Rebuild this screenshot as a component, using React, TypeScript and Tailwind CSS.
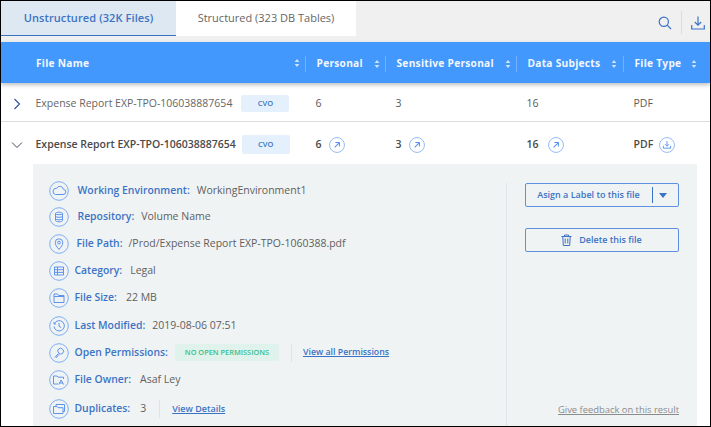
import React from "react";

const ink = "#3b73c4";
const ring = "#7cabf5";

function Sort() {
  return (
    <svg width="6" height="10" viewBox="0 0 6 10" className="shrink-0">
      <path d="M3 1 L5.4 4 H0.6 Z M3 9 L5.4 6 H0.6 Z" fill="#cfe3ff" />
    </svg>
  );
}

function Circle({ children, size = 20 }: { children?: React.ReactNode; size?: number }) {
  return (
    <svg width={size} height={size} viewBox="0 0 20 20" fill="none" stroke={ring} strokeWidth="1" className="shrink-0">
      <circle cx="10" cy="10" r="9.3" strokeWidth="1" />
      {children}
    </svg>
  );
}

const Arrow = () => (
  <Circle size={16}>
    <path d="M7 13 L13 7 M8 7 H13 V12" strokeWidth="1.3" stroke="#5b93ec" />
  </Circle>
);

const Down = () => (
  <Circle size={16}>
    <path d="M10 5 V11.5 M7.5 9 L10 11.5 L12.5 9 M5.5 11 V14 H14.5 V11" strokeWidth="1.2" stroke="#5b93ec" />
  </Circle>
);

const icons: Record<string, React.ReactNode> = {
  cloud: <path d="M6.5 13.5 H14 a2.6 2.6 0 0 0 .4-5.2 A3.6 3.6 0 0 0 7.6 7.4 A3.1 3.1 0 0 0 6.5 13.5 Z" />,
  db: <path d="M6.5 6.5 C6.5 4.8 13.5 4.8 13.5 6.5 V13.5 C13.5 15.2 6.5 15.2 6.5 13.5 Z M6.5 6.8 C7.5 8 12.5 8 13.5 6.8 M6.5 9.5 C7.5 10.6 12.5 10.6 13.5 9.5 M6.5 12 C7.5 13.1 12.5 13.1 13.5 12" />,
  pin: <path d="M10 15.5 C8 13 6.2 11 6.2 8.6 A3.8 3.8 0 0 1 13.8 8.6 C13.8 11 12 13 10 15.5 Z M10 7.2 A1.4 1.4 0 1 0 10 10 A1.4 1.4 0 1 0 10 7.2" />,
  grid: <path d="M5.5 6 H14.5 V14 H5.5 Z M5.5 8.7 H14.5 M5.5 11.4 H14.5 M8.5 6 V14" />,
  folder: <path d="M5 6 H8.5 L9.5 7.5 H15 V14.5 H5 Z M5 8.5 H15" />,
  clock: <path d="M5.5 7.5 A5.2 5.2 0 1 1 5 10.5 M5 6 V8 H7 M10 7 V10.3 L12.2 11.5" />,
  key: <path d="M5.8 14.6 L9.4 10.6 M6.9 15 L10.2 11.2 M13.6 6.2 A2.7 2.7 0 1 1 9.8 10 A2.7 2.7 0 1 1 13.6 6.2 Z" />,
  owner: <path d="M4.5 6 H8 L9 7.2 H14.5 V9 M4.5 6 V14 H9 M12 10 L9.8 14.5 M12 10 L14.6 14.5 M10.6 13 H13.8" />,
  dup: <path d="M7 7 V5.5 H15.5 V12.5 H14 M4.5 7.5 H8 L9 8.7 H14 V14.5 H4.5 Z" />,
};

const rows: { icon: string; label: string; value?: string; h: string; lx: string; vx: string; extra?: React.ReactNode }[] = [
  { icon: "cloud", label: "Working Environment:", value: "WorkingEnvironment1", h: "h-[26px]", lx: "ml-[9px]", vx: "ml-[7px]" },
  { icon: "db", label: "Repository:", value: "Volume Name", h: "h-[26px]", lx: "ml-[9px]", vx: "ml-[7px]" },
  { icon: "pin", label: "File Path:", value: "/Prod/Expense Report EXP-TPO-1060388.pdf", h: "h-[27px]", lx: "ml-[8px]", vx: "ml-[6px]" },
  { icon: "grid", label: "Category:", value: "Legal", h: "h-[27px]", lx: "ml-[6px]", vx: "ml-[8px]" },
  { icon: "folder", label: "File Size:", value: "22 MB", h: "h-[28px]", lx: "ml-[6px]", vx: "ml-[9px]" },
  { icon: "clock", label: "Last Modified:", value: "2019-08-06 07:51", h: "h-[27px]", lx: "ml-[6px]", vx: "ml-[7px]" },
  {
    icon: "key",
    label: "Open Permissions:",
    h: "h-[27px]",
    lx: "ml-[6px]",
    vx: "",
    extra: (
      <>
        <span className="ml-[7px] flex h-[17px] w-[104px] items-center justify-center rounded-[2px] bg-[#dff3ec] text-[7.4px] font-semibold text-[#3dbd8b]">
          NO OPEN PERMISSIONS
        </span>
        <span className="ml-[12px] h-[18px] w-px bg-[#dfe3e6]" />
        <a className="ml-[11px] text-[8.8px] font-semibold text-[#3b73c4] underline">View all Permissions</a>
      </>
    ),
  },
  { icon: "owner", label: "File Owner:", value: "Asaf Ley", h: "h-[28px]", lx: "ml-[6px]", vx: "ml-[9px]" },
  {
    icon: "dup",
    label: "Duplicates:",
    value: "3",
    h: "h-[30px]",
    lx: "ml-[6px]",
    vx: "ml-[10px]",
    extra: (
      <>
        <span className="ml-[13px] h-[18px] w-px bg-[#dfe3e6]" />
        <a className="ml-[12px] text-[9px] font-semibold text-[#3b73c4] underline">View Details</a>
      </>
    ),
  },
];

function Head({ label, pr }: { label: string; pr: string }) {
  return (
    <div className={`flex h-[16px] items-center justify-between border-l border-[#74b0fb] pl-[11px] ${pr}`}>
      <span className="whitespace-nowrap text-[10.2px] font-bold tracking-[0.25px] text-[#f2f7ff]">{label}</span>
      <Sort />
    </div>
  );
}

export default function App() {
  return (
    <div
      className="h-[427px] w-[711px] overflow-hidden border border-l-[1.5px] border-black bg-white text-[#5a5a5a]"
      style={{ fontFamily: '"Open Sans", "Noto Sans", sans-serif' }}
    >
      <div className="flex h-[41px] items-start bg-[#f0f0f0] shadow-[0_1px_2px_rgba(0,0,0,0.15)]">
        <div className="flex h-[35px] w-[175px] items-center justify-center border-b-[1.5px] border-[#3b73c4] bg-[#dee8f3] text-[11px] font-semibold tracking-[0.1px] text-[#3b73c4]">
          Unstructured (32K Files)
        </div>
        <div className="flex h-[35px] w-[180px] items-center justify-center bg-white text-[11px] text-[#666]">
          Structured (323 DB Tables)
        </div>
        <div className="ml-auto mr-[5px] mt-[10px] flex items-center">
          <svg width="14" height="14" viewBox="0 0 14 14" fill="none" stroke="#3b73c4" strokeWidth="1.2">
            <circle cx="5.8" cy="5.8" r="4.6" />
            <path d="M9.2 9.2 L13 13" />
          </svg>
          <span className="mx-[9px] h-[23px] w-px bg-[#dcdcdc]" />
          <svg width="14" height="14" viewBox="0 0 14 14" fill="none" stroke="#3b73c4" strokeWidth="1.2">
            <path d="M7 0.5 V9 M3.8 6 L7 9.2 L10.2 6 M0.7 9 V13 H13.3 V9" />
          </svg>
        </div>
      </div>

      <div className="grid h-[41px] grid-cols-[303.5px_80px_131px_107px_1fr] items-center bg-[#4298fc] pt-[2px] shadow-[0_2px_4px_rgba(0,0,0,0.25)]">
        <div className="flex items-center justify-end pl-[35px] pr-[5px]">
          <span className="mr-auto text-[10.2px] font-bold tracking-[0.25px] text-[#f2f7ff]">File Name</span>
          <Sort />
        </div>
        <Head label="Personal" pr="pr-[5px]" />
        <Head label="Sensitive Personal" pr="pr-[5px]" />
        <Head label="Data Subjects" pr="pr-[6px]" />
        <Head label="File Type" pr="pr-[13px]" />
      </div>

      <div className="grid h-[39px] grid-cols-[303.5px_80px_131px_107px_1fr] items-center border-b border-[#dcdcdc] pt-[3px] text-[10.5px]">
        <div className="flex items-center">
          <svg width="10" height="12" viewBox="0 0 10 12" fill="none" stroke="#2f4fa0" strokeWidth="1.1" className="ml-[11px]">
            <path d="M2.5 1 L7.5 6 L2.5 11" />
          </svg>
          <span className="ml-[13.5px] whitespace-nowrap text-[#666]">Expense Report EXP-TPO-106038887654</span>
          <span className="ml-[9px] flex h-[17px] w-[48px] items-center justify-center rounded-[2px] bg-[#e4f1fd] text-[7.5px] font-semibold text-[#3b73c4]">CVO</span>
        </div>
        <div className="pl-[11px]">6</div>
        <div className="pl-[11px]">3</div>
        <div className="pl-[11px]">16</div>
        <div className="pl-[11px]">PDF</div>
      </div>

      <div className="grid h-[42px] grid-cols-[303.5px_80px_131px_107px_1fr] items-center pt-[3px] text-[10.5px] font-semibold text-[#4a4a4a]">
        <div className="flex items-center">
          <svg width="12" height="8" viewBox="0 0 12 8" fill="none" stroke="#3f4a5a" strokeWidth="1" className="ml-[9.5px]">
            <path d="M1 1.5 L6 6.5 L11 1.5" />
          </svg>
          <span className="ml-[13px] whitespace-nowrap">Expense Report EXP-TPO-106038887654</span>
          <span className="ml-[6px] flex h-[19px] w-[48px] items-center justify-center rounded-[2px] bg-[#e4f1fd] text-[7.5px] font-semibold text-[#3b73c4]">CVO</span>
        </div>
        <div className="flex items-center gap-[7px] pl-[11px]">6 <Arrow /></div>
        <div className="flex items-center gap-[7px] pl-[11px]">3 <Arrow /></div>
        <div className="flex items-center gap-[9px] pl-[11px]">16 <Arrow /></div>
        <div className="flex items-center gap-[6px] pl-[11px]">PDF <Down /></div>
      </div>

      <div className="ml-[31.5px] mr-[13px] flex h-[262px] bg-[#f0f3f4]">
        <div className="w-[473px] pl-[16px] pt-[14px]">
          {rows.map((r) => (
            <div key={r.label} className={`flex items-center ${r.h}`}>
              <Circle>
                <g stroke="#5f93ea" strokeWidth="1">{icons[r.icon]}</g>
              </Circle>
              <span className={`${r.lx} whitespace-nowrap text-[10.4px] font-semibold text-[#3b73c4]`}>{r.label}</span>
              {r.value && <span className={`${r.vx} whitespace-nowrap text-[10.5px] text-[#5f5f5f]`}>{r.value}</span>}
              {r.extra}
            </div>
          ))}
        </div>
        <div className="mt-[19px] flex flex-1 flex-col border-l border-[#e1e4e6] pl-[18px] pr-[18px]">
          <button className="flex h-[24px] w-[154px] items-center rounded-[2px] border border-[#5f8fe0] text-[9px] font-semibold" style={{ color: ink }}>
            <span className="w-[126px] text-center">Asign a Label to this file</span>
            <span className="h-[16px] w-px bg-[#3b73c4]" />
            <svg width="8" height="5" viewBox="0 0 8 5" className="ml-[6px]">
              <path d="M0 0 H8 L4 5 Z" fill="#3b73c4" />
            </svg>
          </button>
          <button className="mt-[21px] flex h-[24px] w-[154px] items-center justify-center gap-[7px] rounded-[2px] border border-[#5f8fe0] text-[9px] font-semibold" style={{ color: ink }}>
            <svg width="11" height="12" viewBox="0 0 11 12" fill="none" stroke="#3b73c4" strokeWidth="1">
              <path d="M0.5 2.5 H10.5 M3.5 2.5 V1 H7.5 V2.5 M1.8 2.5 L2.3 11.5 H8.7 L9.2 2.5 M4.2 4.5 V9.5 M6.8 4.5 V9.5" />
            </svg>
            Delete this file
          </button>
          <a className="mb-[9px] mt-auto self-end whitespace-nowrap text-[9.4px] text-[#8c8c8c] underline">Give feedback on this result</a>
        </div>
      </div>
    </div>
  );
}
